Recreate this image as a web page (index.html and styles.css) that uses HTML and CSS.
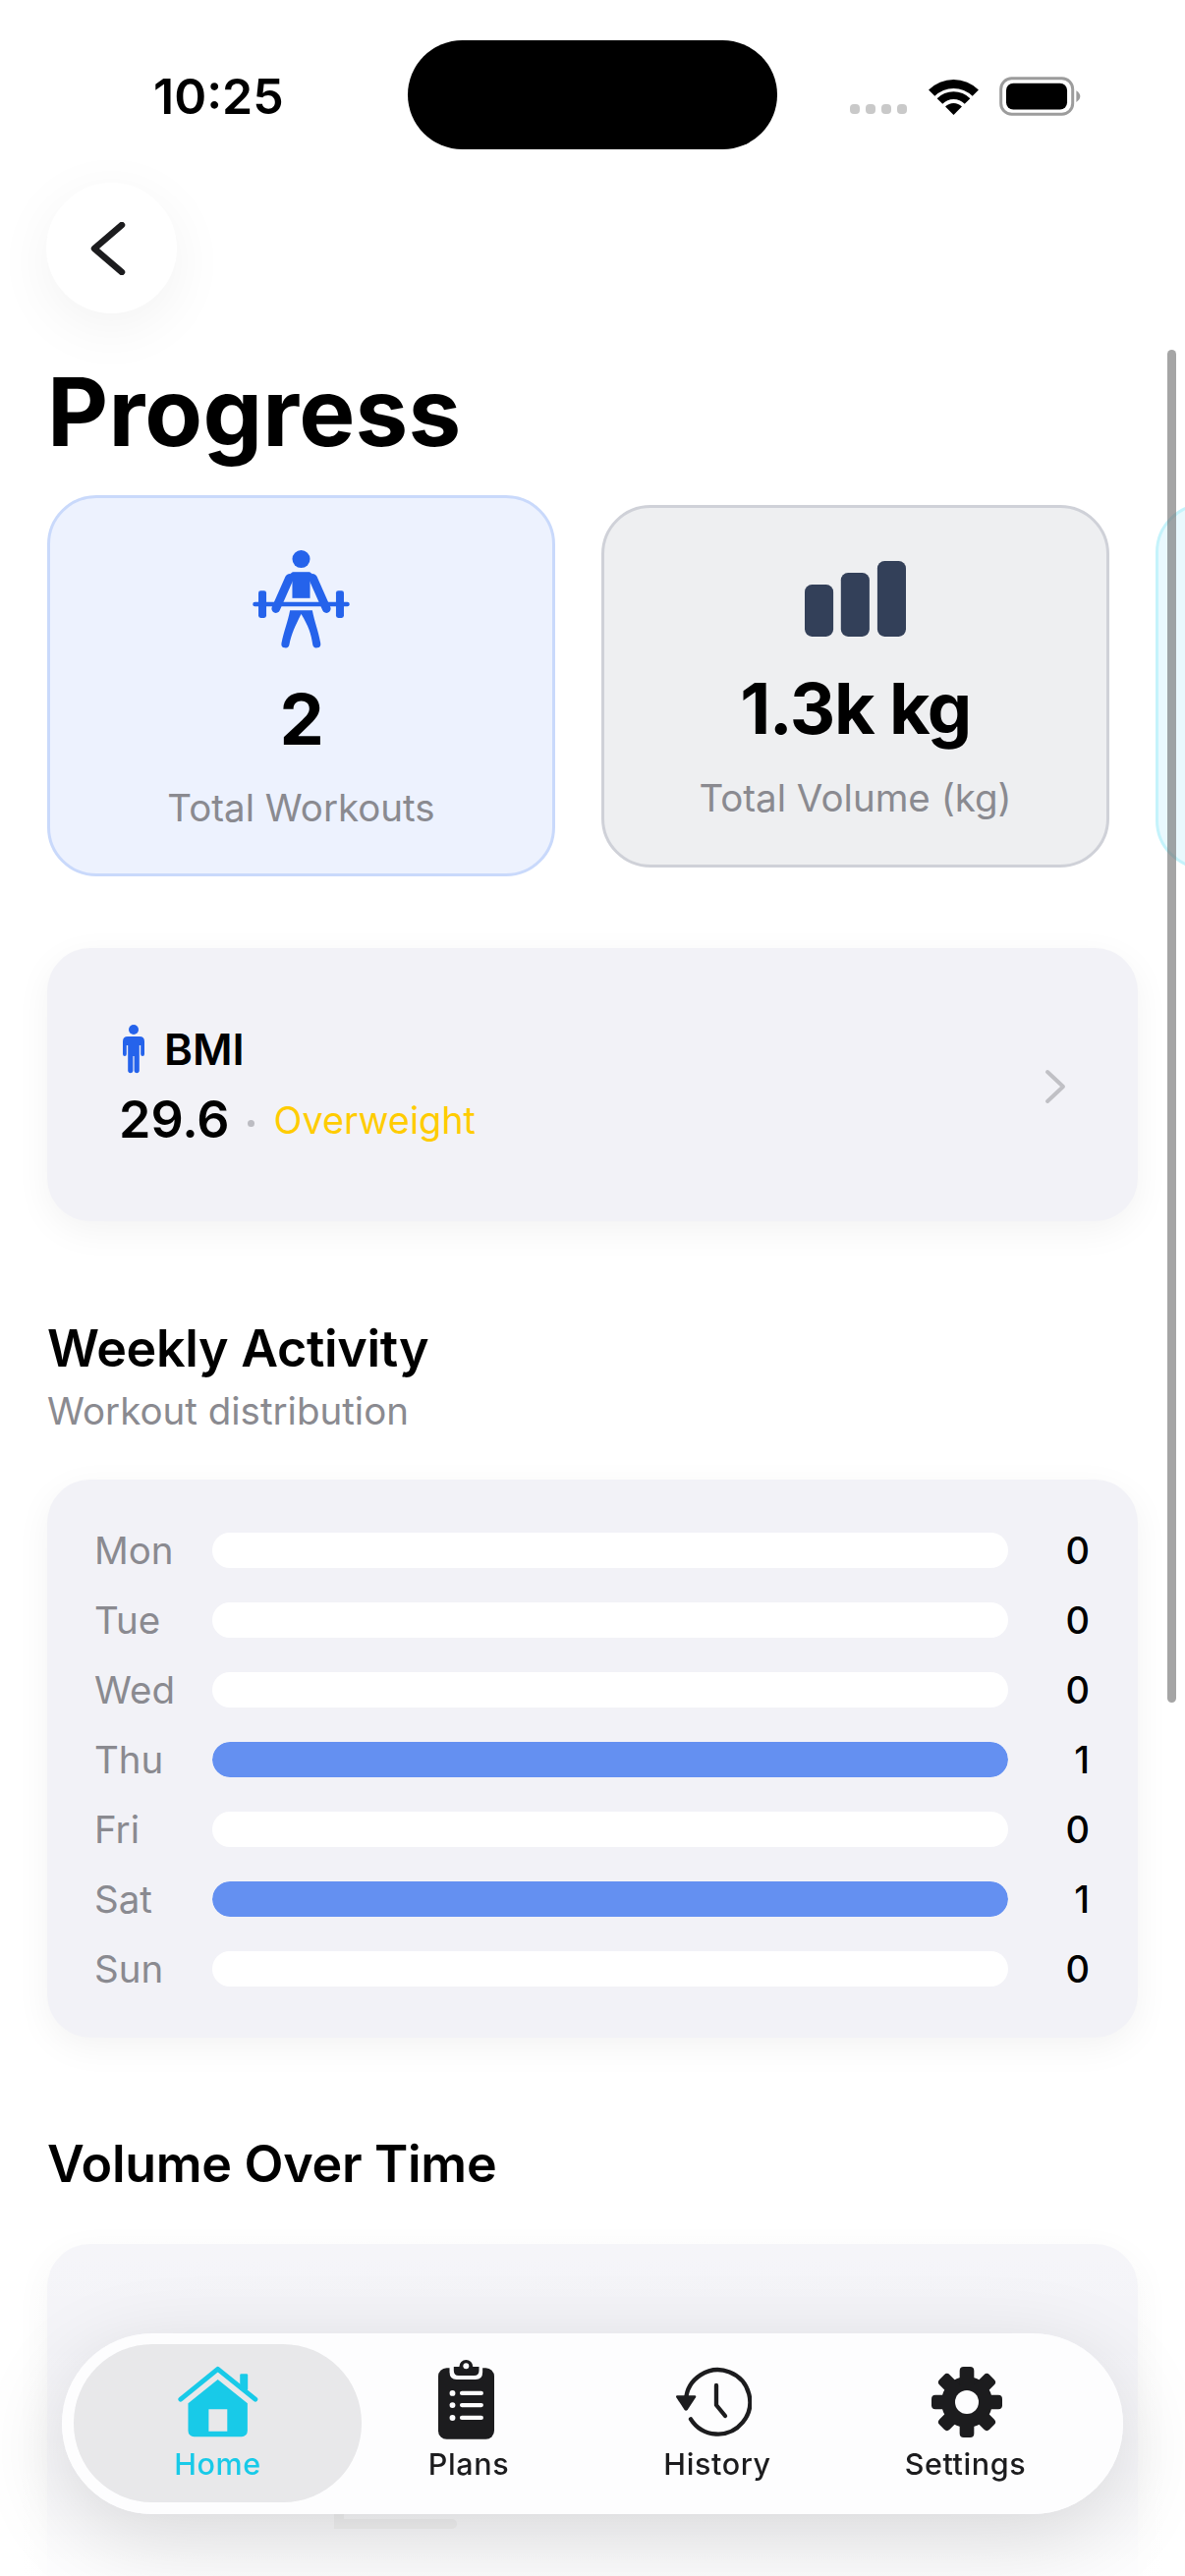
FILE: index.html
```html
<!DOCTYPE html>
<html lang="en">
<head>
<meta charset="utf-8">
<title>Progress</title>
<link rel="stylesheet" href="styles.css">
</head>
<body>
<div class="screen">
  <div class="statusbar">
    <span class="time">10:25</span>
    <div class="island"></div>
    <div class="status-icons">
      <div class="signal"><i></i><i></i><i></i><i></i></div>
      <svg class="wifi" viewBox="315 85 152 115"><path d="M314 120A109 109 0 0 1 468 120L449 139A82 82 0 0 0 333 139Z"/><path d="M340 146A72 72 0 0 1 442 146L425 163A48 48 0 0 0 357 163Z"/><path d="M365.500 171.500A36 36 0 0 1 416.500 171.500L391 197Z"/></svg>
      <svg class="battery" viewBox="532 82 250 120"><rect x="537" y="87" width="220" height="110" rx="33" fill="none" stroke="#9c9c9c" stroke-width="9"/><rect x="553" y="102" width="187" height="81" rx="22"/><path d="M768 125Q780 133 780 142Q780 152 768 160Z" fill="#9c9c9c"/></svg>
    </div>
  </div>

  <main class="content">
    <button class="back" aria-label="Back">
      <svg class="back-icon" viewBox="0 0 36 54"><path d="M32 3L4 27L32 51"/></svg>
    </button>
    <h1 class="title">Progress</h1>

    <div class="carousel">
      <section class="stat stat-blue">
        <svg class="stat-icon lifter" viewBox="110 82 296 302">
          <circle cx="258" cy="112" r="27"/>
          <path d="M231 152H285V231H231Z"/>
          <path class="limb" d="M222 170L181 263M294 170L335 263"/>
          <rect x="222" y="152" width="72" height="26" rx="13"/>
          <rect x="128" y="208" width="24" height="83" rx="7"/>
          <rect x="364" y="208" width="24" height="83" rx="7"/>
          <rect x="111" y="243" width="294" height="13" rx="6"/>
          <path d="M224 268H292C298 300 310 330 317 368A12 12 0 0 1 293 372C289 340 280 315 258 279C240 315 228 340 222 372A12 12 0 0 1 198 368C206 330 218 300 224 268Z"/>
        </svg>
        <div class="stat-value">2</div>
        <div class="stat-label">Total Workouts</div>
      </section>
      <section class="stat stat-gray">
        <svg class="stat-icon bars" viewBox="115 120 308 230">
          <rect x="115" y="192" width="87" height="158" rx="22"/>
          <rect x="225" y="156" width="87" height="194" rx="22"/>
          <rect x="336" y="120" width="87" height="230" rx="22"/>
        </svg>
        <div class="stat-value">1.3k kg</div>
        <div class="stat-label">Total Volume (kg)</div>
      </section>
      <section class="stat stat-cyan"></section>
    </div>

    <section class="bmi">
      <div class="bmi-text">
        <div class="bmi-head">
          <svg class="bmi-icon" viewBox="0 0 22 50"><circle cx="11" cy="5" r="5"/><path d="M5 12H17Q22 12 22 17V30A1.900 1.900 0 0 1 18.200 30V21H16.800V47.300A2.700 2.700 0 0 1 11.600 47.300V32H10.400V47.300A2.700 2.700 0 0 1 5.200 47.300V21H3.800V30A1.900 1.900 0 0 1 0 30V17Q0 12 5 12Z"/></svg>
          <span class="bmi-name">BMI</span>
        </div>
        <div class="bmi-values">
          <span class="bmi-number">29.6</span>
          <i class="bmi-dot"></i>
          <span class="bmi-status">Overweight</span>
        </div>
      </div>
      <svg class="chevron" viewBox="0 0 24 36"><path d="M4 3L20 18L4 33"/></svg>
    </section>

    <header class="section-head">
      <h2 class="section-title">Weekly Activity</h2>
      <p class="section-sub">Workout distribution</p>
    </header>

    <section class="chart">
      <div class="row"><span class="day">Mon</span><div class="track"></div><span class="count">0</span></div>
      <div class="row"><span class="day">Tue</span><div class="track"></div><span class="count">0</span></div>
      <div class="row"><span class="day">Wed</span><div class="track"></div><span class="count">0</span></div>
      <div class="row"><span class="day">Thu</span><div class="track"><div class="fill"></div></div><span class="count">1</span></div>
      <div class="row"><span class="day">Fri</span><div class="track"></div><span class="count">0</span></div>
      <div class="row"><span class="day">Sat</span><div class="track"><div class="fill"></div></div><span class="count">1</span></div>
      <div class="row"><span class="day">Sun</span><div class="track"></div><span class="count">0</span></div>
    </section>

    <h2 class="section-title volume-title">Volume Over Time</h2>
    <section class="volume">
      <svg class="volume-empty" viewBox="0 0 125 90"><path d="M5 0V81H120"/><circle cx="42" cy="34" r="14"/><circle cx="110" cy="42" r="12"/></svg>
    </section>
  </main>

  <div class="fade"></div>

  <div class="scrollbar"></div>

  <nav class="tabbar">
    <a class="tab tab-active">
      <svg class="tab-icon home" viewBox="360 85 246 220">
        <path class="home-roof" d="M368 188L482 95L597 188"/>
        <rect x="550" y="110" width="24" height="50" rx="4"/>
        <path fill-rule="evenodd" d="M482 127L573 200V285A18 18 0 0 1 555 303H409A18 18 0 0 1 391 285V200ZM454 218V286H511V218Z"/>
      </svg>
      <span class="tab-label">Home</span>
    </a>
    <a class="tab">
      <svg class="tab-icon plans" viewBox="1157 65 173 247">
        <rect x="1157" y="92" width="173" height="220" rx="26"/>
        <path d="M1192 80H1294V105Q1294 128 1272 128H1214Q1192 128 1192 105Z" fill="#fdfdfe"/>
        <path d="M1205 88H1222A21 21 0 0 1 1264 88H1283V100Q1283 116 1268 116H1220Q1205 116 1205 100Z"/>
        <circle cx="1243" cy="86" r="9" fill="#fdfdfe"/>
        <g fill="#fdfdfe"><circle cx="1201" cy="170" r="9"/><circle cx="1201" cy="207" r="9"/><circle cx="1201" cy="246" r="9"/></g>
        <path d="M1230 170H1290M1230 207H1290M1230 246H1290" fill="none" stroke="#fdfdfe" stroke-width="13" stroke-linecap="round"/>
      </svg>
      <span class="tab-label">Plans</span>
    </a>
    <a class="tab">
      <svg class="tab-icon history" viewBox="200 88 234 213">
        <path class="clock" d="M233 190A98 98 0 1 1 248 248"/>
        <path class="clock" d="M326 145V205L353 238"/>
        <path d="M207 176H260Q266 176 263 182L238 220Q233 224 229 220L204 182Q201 176 207 176Z"/>
      </svg>
      <span class="tab-label">History</span>
    </a>
    <a class="tab">
      <svg class="tab-icon settings" viewBox="984 87 216 216">
        <circle cx="1092" cy="195" r="78"/>
        <g>
          <rect x="1070" y="87" width="44" height="216" rx="12"/>
          <rect x="1070" y="87" width="44" height="216" rx="12" transform="rotate(45 1092 195)"/>
          <rect x="1070" y="87" width="44" height="216" rx="12" transform="rotate(90 1092 195)"/>
          <rect x="1070" y="87" width="44" height="216" rx="12" transform="rotate(135 1092 195)"/>
        </g>
        <circle cx="1092" cy="195" r="36" fill="#fdfdfe"/>
      </svg>
      <span class="tab-label">Settings</span>
    </a>
  </nav>
</div>
</body>
</html>
```

FILE: styles.css
```css
* { box-sizing: border-box; margin: 0; padding: 0; }
html, body { width: 1206px; height: 2622px; overflow: hidden; background: #fff; }
body { font-family: Inter, "Liberation Sans", sans-serif; color: #000; }
.screen { position: relative; width: 1206px; height: 2622px; overflow: hidden; background: #fff; }

.statusbar { height: 186px; position: relative; padding-top: 41px; }
.time { position: absolute; left: 156px; top: 68px; font-size: 50px; line-height: 60px; font-weight: 600; }
.island { width: 376px; height: 111px; margin-left: 415px; border-radius: 56px; background: #000; }
.status-icons { position: absolute; left: 865px; top: 78px; width: 236px; height: 40px; display: flex; align-items: flex-end; }
.signal { display: flex; gap: 6px; margin-bottom: 2px; }
.signal i { width: 10px; height: 10px; border-radius: 4px; background: #c9c9c9; }
.wifi { width: 51px; height: 38px; margin-left: 22px; fill: #000; }
.battery { width: 83px; height: 40px; margin-left: 21px; fill: #000; }

.content { padding: 0 48px; }
.back { width: 133px; height: 133px; margin-left: -1px; border: 0; border-radius: 50%; background: #fff; box-shadow: 0 14px 60px rgba(0,0,0,.055); display: flex; align-items: center; justify-content: center; }
.back-icon { width: 36px; height: 54px; margin-right: 8px; fill: none; stroke: #1c1c1e; stroke-width: 6.500; stroke-linecap: round; stroke-linejoin: round; }
.title { font-size: 96px; line-height: 116px; font-weight: 700; letter-spacing: 0.2px; margin: 42px 0 0 0; color: #000; }

.carousel { display: flex; align-items: center; gap: 47px; width: 1158px; margin-top: 27px; height: 388px; overflow: hidden; }
.stat { flex: 0 0 517px; border-radius: 50px; border: 3px solid; display: flex; flex-direction: column; align-items: center; }
.stat-blue { height: 388px; background: #edf2fe; border-color: #c9d9fb; padding-top: 52px; }
.stat-gray { height: 369px; background: #eeeff1; border-color: #cfd1d8; padding-top: 54px; }
.stat-cyan { height: 373px; background: #e9f9fe; border-color: #c5f3fb; }
.stat-icon { display: block; }
.lifter { width: 99px; height: 101px; fill: #2563eb; }
.limb { fill: none; stroke: #2563eb; stroke-width: 26; stroke-linecap: round; }
.bars { width: 103px; height: 77px; fill: #334059; }
.stat-value { font-size: 72px; line-height: 88px; font-weight: 700; letter-spacing: -1.400px; margin-top: 28px; color: #000; }
.stat-label { font-size: 38.500px; line-height: 46px; font-weight: 400; color: #8a8a90; margin-top: 23px; }
.stat-gray .stat-value { margin-top: 29px; }
.stat-gray .stat-label { margin-top: 24px; }

.bmi { height: 278px; margin-top: 73px; border-radius: 44px; background: #f2f2f7; box-shadow: 0 10px 36px rgba(0,0,0,.05); display: flex; align-items: center; justify-content: space-between; padding: 0 72px 0 73px; width: 1110px; }
.bmi-text { padding-top: 6px; }
.bmi-head { display: flex; align-items: center; gap: 20px; }
.bmi-icon { width: 22px; height: 50px; fill: #2563eb; margin-left: 4px; }
.bmi-name { font-size: 44px; line-height: 50px; font-weight: 600; }
.bmi-values { display: flex; align-items: center; margin-top: 16px; }
.bmi-number { font-size: 52px; line-height: 62px; font-weight: 600; }
.bmi-dot { width: 7px; height: 7px; border-radius: 50%; background: #bcbcc2; margin: 6px 20px 0 18px; }
.bmi-status { font-size: 37.800px; line-height: 62px; color: #ffcc00; }
.chevron { width: 24px; height: 36px; margin-top: 4px; fill: none; stroke: #c0c0c5; stroke-width: 4; stroke-linecap: round; stroke-linejoin: round; }

.section-head { margin-top: 97px; }
.section-title { font-size: 52px; line-height: 66px; font-weight: 600; letter-spacing: -0.3px; color: #000; }
.section-sub { font-size: 38.500px; line-height: 48px; color: #8a8a90; margin: 6px 0 0 0; }

.chart { width: 1110px; height: 568px; margin-top: 46px; border-radius: 44px; background: #f2f2f7; box-shadow: 0 10px 36px rgba(0,0,0,.05); padding: 36px 48px 34px 48px; display: flex; flex-direction: column; justify-content: flex-start; }
.row { height: 71px; display: flex; align-items: center; flex: 0 0 71px; margin-top: 0; }
.day { width: 120px; font-size: 38.500px; color: #8a8a90; }
.track { width: 810px; height: 36px; border-radius: 18px; background: #fff; overflow: hidden; }
.fill { height: 100%; width: 100%; border-radius: 18px; background: #6490f1; }
.count { width: 83px; text-align: right; font-size: 38px; font-weight: 500; color: #000; }

.volume-title { margin-top: 96px; }
.volume { width: 1110px; height: 400px; margin-top: 48px; border-radius: 44px; background: #f2f2f7; box-shadow: 0 10px 36px rgba(0,0,0,.05); padding: 204px 0 0 292px; }
.volume-empty { display: block; width: 125px; height: 90px; fill: #dcdcde; }
.volume-empty path { fill: none; stroke: #d8d8da; stroke-width: 10; stroke-linecap: round; }

.fade { position: absolute; left: 0; right: 0; bottom: 0; height: 345px; background: linear-gradient(to bottom, rgba(255,255,255,.25), rgba(255,255,255,.15) 30%, rgba(255,255,255,.55) 75%, rgba(255,255,255,.9)); }

.scrollbar { position: absolute; left: 1188px; top: 356px; width: 9px; height: 1377px; border-radius: 5px; background: rgba(110,110,110,.62); }

.tabbar { position: absolute; left: 63px; top: 2375px; width: 1080px; height: 184px; border-radius: 92px; background: rgba(253,253,254,.93); backdrop-filter: blur(14px); box-shadow: 0 24px 90px rgba(0,0,0,.14); display: grid; grid-template-columns: 253px 258px 248px 257px; padding: 0 32px; }
.tab { position: relative; display: flex; flex-direction: column; align-items: center; color: #1c1c1e; padding-top: 26px; }
.tab-active { color: #18cae8; }
.tab-active::before { content: ""; position: absolute; left: -20px; right: -20px; top: 11px; bottom: 12px; border-radius: 80px; background: #e8e8ea; }
.tab-icon { position: relative; display: block; height: 82px; }
.home { width: 82px; height: 73px; margin-top: 7px; margin-bottom: 2px; fill: #18cae8; }
.home-roof { fill: none; stroke: #18cae8; stroke-width: 15; stroke-linecap: round; stroke-linejoin: round; }
.plans { width: 57px; margin-right: 5px; fill: #1c1c1e; }
.history { width: 78px; height: 71px; margin-top: 8px; margin-bottom: 3px; margin-right: 8px; fill: #1c1c1e; }
.clock { fill: none; stroke: #1c1c1e; stroke-width: 13; stroke-linecap: round; stroke-linejoin: round; }
.settings { width: 72px; height: 72px; margin-top: 8px; margin-bottom: 2px; margin-left: 3px; fill: #1c1c1e; }
.tab-label { position: relative; font-size: 30.500px; line-height: 38px; font-weight: 500; letter-spacing: 0.6px; margin-top: 6px; }
```
